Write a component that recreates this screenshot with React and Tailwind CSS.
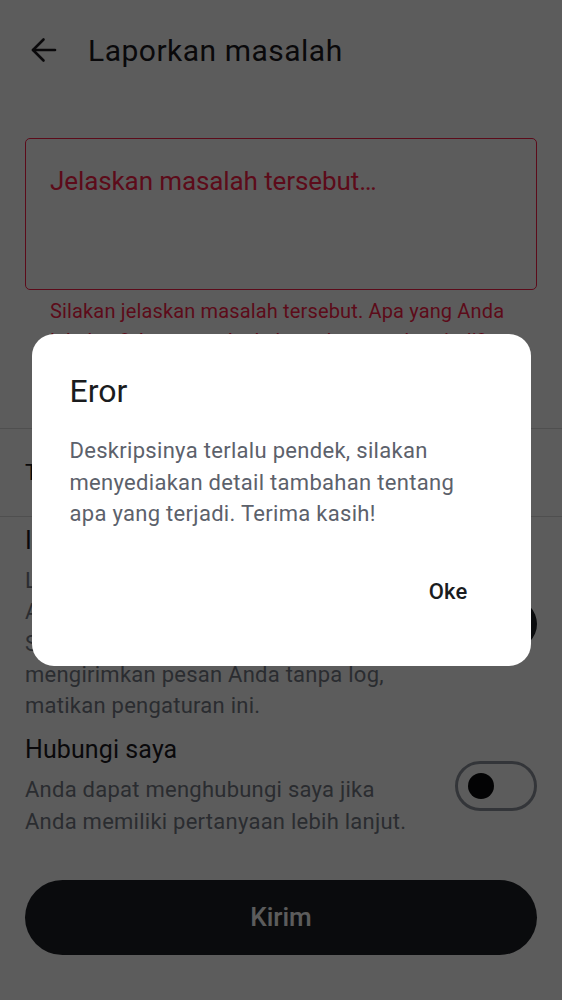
import React from 'react';

const font = { fontFamily: 'Roboto, "Noto Sans", sans-serif' };

function BackIcon() {
  return (
    <svg width="26" height="26" viewBox="0 0 26 26" fill="none" stroke="#1c1b1f" strokeWidth="2.6" strokeLinecap="round" strokeLinejoin="round">
      <path d="M24 13H2" />
      <path d="M12.5 2.5 2 13l10.5 10.5" />
    </svg>
  );
}

function Toggle({ on }) {
  if (on) {
    return (
      <div className="flex h-[50px] w-[82px] shrink-0 items-center justify-end rounded-full bg-[#1c1f24] px-[7px]">
        <div className="h-[36px] w-[36px] rounded-full bg-white" />
      </div>
    );
  }
  return (
    <div className="flex h-[50px] w-[82px] shrink-0 items-center rounded-full border-[3px] border-[#8f949d] px-[10px]">
      <div className="h-[26px] w-[26px] rounded-full bg-[#0a0b0d]" />
    </div>
  );
}

function SettingRow({ title, children, on }) {
  return (
    <div className="flex items-center gap-4 px-[25px]">
      <div className="min-w-0 flex-1">
        <div className="text-[25px] leading-[30px] tracking-[0.1px] text-[#1c1b1f]">{title}</div>
        <div className="mt-[9px] whitespace-nowrap text-[22px] leading-[31.3px] tracking-[0.25px] text-[#767b86]">{children}</div>
      </div>
      <Toggle on={on} />
    </div>
  );
}

export default function App() {
  return (
    <div className="relative h-[1000px] w-full overflow-hidden bg-white" style={font}>
      <header className="flex h-[100px] items-center gap-[31px] pl-[31px]">
        <BackIcon />
        <h1 className="text-[30px] font-normal tracking-[0.5px] text-[#1c1b1f]">Laporkan masalah</h1>
      </header>

      <div className="mx-[25px] mt-[38px] h-[152px] rounded-[5px] border-[1.5px] border-[#ff1f4a] px-[24px] pt-[26px]">
        <div className="text-[26px] leading-[32px] tracking-[-0.1px] text-[#ff1f4a]">Jelaskan masalah tersebut…</div>
      </div>
      <p className="mt-[6px] px-[50px] text-[20px] leading-[30px] tracking-[0.15px] text-[#ff1f4a]">
        Silakan jelaskan masalah tersebut. Apa yang Anda<br />lakukan? Apa yang Anda harapkan untuk terjadi?
      </p>

      <div className="mt-[72px] border-t border-[#dcdcdc]" />
      <div className="flex h-[87px] items-center px-[25px] text-[22px] text-[#1c1b1f]">Tipe masalah</div>
      <div className="border-t border-[#dcdcdc]" />

      <div className="mt-[9px]">
        <SettingRow title="Izinkan log" on>
          Log membantu kami memahami<br />Anda dengan lebih baik.<br />Sebaliknya, jika Anda ingin<br />mengirimkan pesan Anda tanpa log,<br />matikan pengaturan ini.
        </SettingRow>
      </div>
      <div className="mt-[14px]">
        <SettingRow title="Hubungi saya">
          Anda dapat menghubungi saya jika<br />Anda memiliki pertanyaan lebih lanjut.
        </SettingRow>
      </div>

      <div className="mx-[25px] mt-[43px]">
        <button className="flex h-[75px] w-full items-center justify-center rounded-full bg-[#1c1f24] text-[26px] font-medium text-white">Kirim</button>
      </div>

      <div className="absolute inset-0 flex items-center justify-center bg-black/[0.64]">
        <div className="h-[332px] w-[499px] rounded-[22px] bg-white px-[38px] pt-[37px]">
          <h2 className="text-[32px] leading-[40px] text-[#1a1c1e]">Eror</h2>
          <p className="mt-[24px] text-[22px] leading-[31.5px] tracking-[0.3px] text-[#5c616b]">
            Deskripsinya terlalu pendek, silakan<br />menyediakan detail tambahan tentang<br />apa yang terjadi. Terima kasih!
          </p>
          <div className="mt-[45px] flex justify-end pr-[25px]">
            <button className="text-[22px] font-medium tracking-[0.2px] text-[#1a1c1e]">Oke</button>
          </div>
        </div>
      </div>
    </div>
  );
}
